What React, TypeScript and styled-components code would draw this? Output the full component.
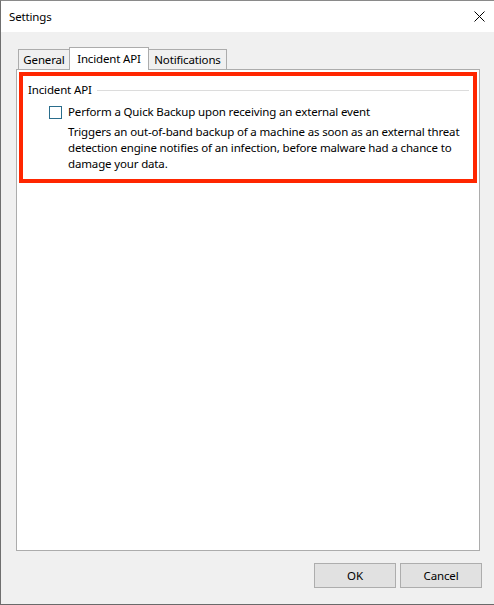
import React from "react";
import styled, { createGlobalStyle } from "styled-components";

const Global = createGlobalStyle`
  html, body { margin: 0; padding: 0; background: #ffffff; }
  body { font-family: "Noto Sans", "Open Sans", sans-serif; font-size: 11.5px; letter-spacing: -0.15px; color: #000; }
  * { box-sizing: border-box; }
`;

const Window = styled.div`
  width: 494px;
  height: 605px;
  display: flex;
  flex-direction: column;
  border-top: 1px solid #8a8a8a;
  border-left: 1px solid #6f6f6f;
  border-bottom: 1px solid #6a6a6a;
  box-shadow: 0 1px 0 #c8c8c8;
  background: #f0f0f0;
`;

const TitleBar = styled.div`
  height: 31px;
  flex: none;
  background: #ffffff;
  display: flex;
  align-items: center;
  justify-content: space-between;
  padding: 0 8px 0 8px;
`;

const Title = styled.span`
  font-size: 11.5px;
  line-height: 16px;
  margin-top: 1px;
`;

const CloseBtn = styled.div`
  width: 12px;
  height: 12px;
  margin-right: 1px;
  display: flex;
  align-items: center;
  justify-content: center;
`;

const Body = styled.div`
  flex: 1;
  display: flex;
  flex-direction: column;
  padding: 15px 12px 0 15px;
`;

const TabRow = styled.div`
  display: flex;
  align-items: flex-end;
  height: 22px;
  padding-left: 2px;
`;

const Tab = styled.div<{ $active?: boolean; $w: number }>`
  width: ${(p) => p.$w}px;
  height: ${(p) => (p.$active ? 23 : 20)}px;
  margin-bottom: ${(p) => (p.$active ? -1 : 0)}px;
  margin-left: -1px;
  &:first-child { margin-left: 0; }
  border: 1px solid #acacac;
  border-bottom: none;
  background: ${(p) => (p.$active ? "#ffffff" : "#f0f0f0")};
  position: relative;
  z-index: ${(p) => (p.$active ? 2 : 1)};
  display: flex;
  align-items: ${(p) => (p.$active ? "flex-start" : "center")};
  padding-top: ${(p) => (p.$active ? 3 : 1)}px;
  justify-content: center;
  line-height: 16px;
  white-space: nowrap;
`;

const Panel = styled.div`
  width: 464px;
  height: 482px;
  border: 1px solid #acacac;
  background: #ffffff;
  padding: 2px;
`;

const Highlight = styled.div`
  height: 111px;
  border: 4px solid #ff2600;
  padding: 6px 4px 0 5px;
`;

const GroupHeader = styled.div`
  display: flex;
  align-items: center;
  gap: 5px;
  height: 16px;
`;

const GroupLabel = styled.span`
  line-height: 16px;
  white-space: nowrap;
`;

const GroupLine = styled.div`
  flex: 1;
  height: 1px;
  background: #dcdcdc;
  margin-top: 1px;
`;

const OptionRow = styled.div`
  display: flex;
  align-items: center;
  gap: 6px;
  margin: 6px 0 0 21px;
`;

const Checkbox = styled.div`
  width: 13px;
  height: 13px;
  border: 1px solid #2a6d8c;
  background: #ffffff;
  flex: none;
`;

const OptionText = styled.span`
  line-height: 16px;
  white-space: nowrap;
`;

const Description = styled.p`
  margin: 4px 0 0 40px;
  line-height: 16px;
  width: 404px;
`;

const Footer = styled.div`
  display: flex;
  justify-content: flex-end;
  gap: 4px;
  margin-top: 12px;
`;

const Button = styled.button`
  width: 82px;
  height: 25px;
  background: #e1e1e1;
  border: 1px solid #adadad;
  font-family: "Noto Sans", "Open Sans", sans-serif;
  font-size: 11.5px;
  letter-spacing: -0.15px;
  color: #000;
  padding: 0;
`;

export default function App() {
  return (
    <>
      <Global />
      <Window>
        <TitleBar>
          <Title>Settings</Title>
          <CloseBtn>
            <svg width="11" height="11" viewBox="0 0 11 11">
              <path d="M0.5 0.5 L10.5 10.5 M10.5 0.5 L0.5 10.5" stroke="#000" strokeWidth="1" fill="none" />
            </svg>
          </CloseBtn>
        </TitleBar>
        <Body>
          <TabRow>
            <Tab $w={52}>General</Tab>
            <Tab $w={80} $active>Incident API</Tab>
            <Tab $w={79}>Notifications</Tab>
          </TabRow>
          <Panel>
            <Highlight>
              <GroupHeader>
                <GroupLabel>Incident API</GroupLabel>
                <GroupLine />
              </GroupHeader>
              <OptionRow>
                <Checkbox />
                <OptionText>Perform a Quick Backup upon receiving an external event</OptionText>
              </OptionRow>
              <Description>
                Triggers an out-of-band backup of a machine as soon as an external threat detection engine notifies of an infection, before malware had a chance to damage your data.
              </Description>
            </Highlight>
          </Panel>
          <Footer>
            <Button>OK</Button>
            <Button>Cancel</Button>
          </Footer>
        </Body>
      </Window>
    </>
  );
}
